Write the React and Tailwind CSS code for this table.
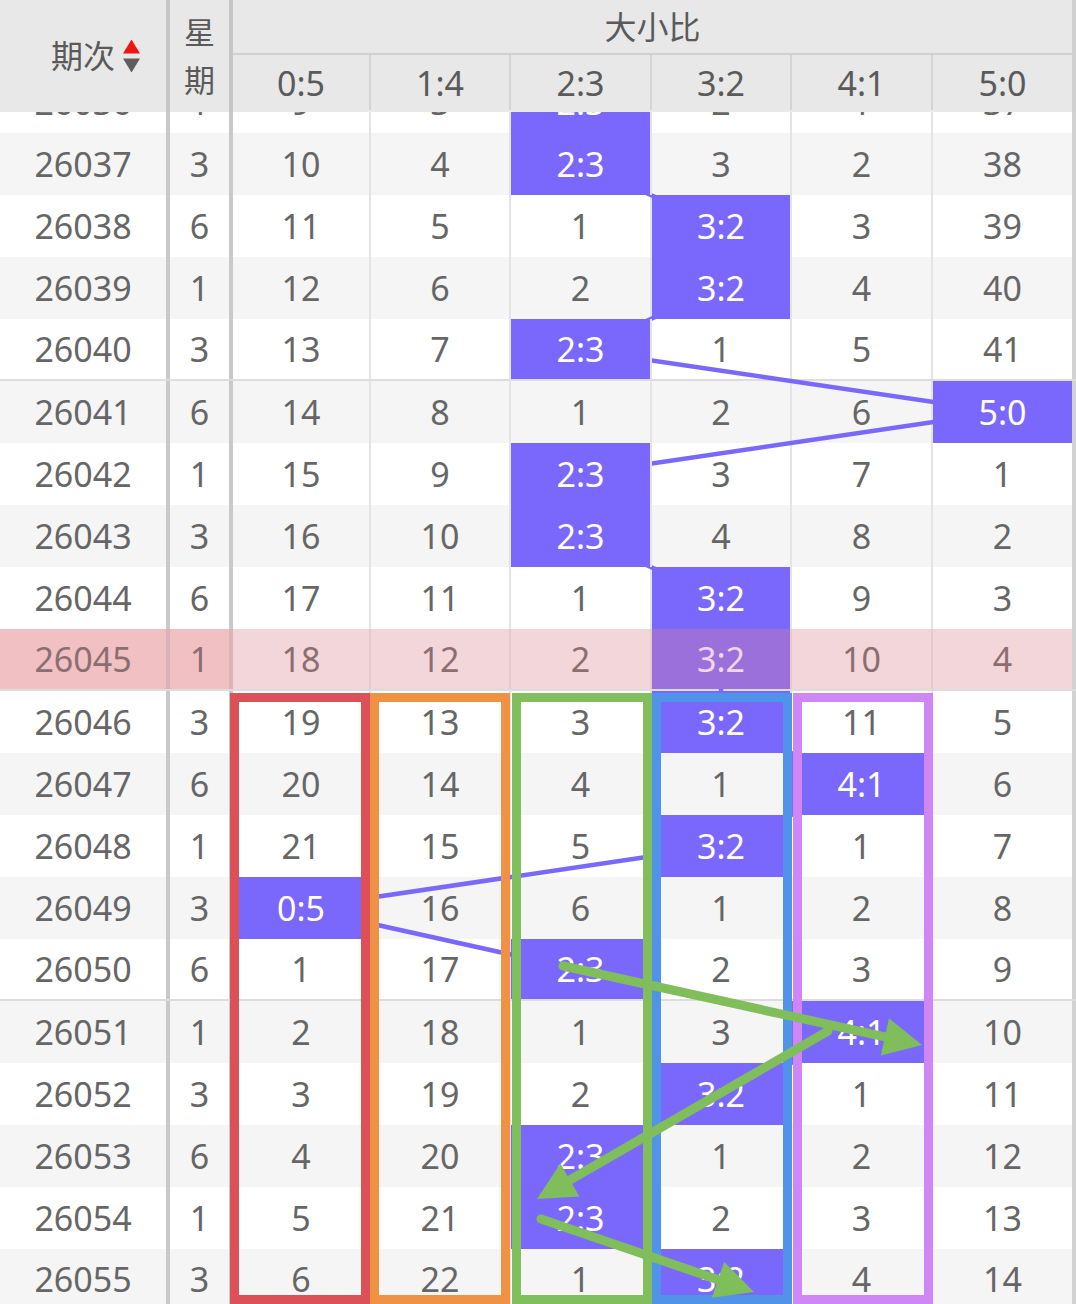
import React from 'react';

const LABELS = ['0:5', '1:4', '2:3', '3:2', '4:1', '5:0'];
const W = ['w-[138px]', 'w-[140px]', 'w-[141px]', 'w-[140px]', 'w-[141px]', 'w-[139px]'];
const COLX = [233, 371, 511, 652, 792, 933, 1072];
const CX = LABELS.map((_, i) => (COLX[i] + COLX[i + 1] - 2) / 2);

const RAW = [
  [26036, 1, 2, [9, 3, 0, 2, 1, 37]],
  [26037, 3, 2, [10, 4, 0, 3, 2, 38]],
  [26038, 6, 3, [11, 5, 1, 0, 3, 39]],
  [26039, 1, 3, [12, 6, 2, 0, 4, 40]],
  [26040, 3, 2, [13, 7, 0, 1, 5, 41]],
  [26041, 6, 5, [14, 8, 1, 2, 6, 0]],
  [26042, 1, 2, [15, 9, 0, 3, 7, 1]],
  [26043, 3, 2, [16, 10, 0, 4, 8, 2]],
  [26044, 6, 3, [17, 11, 1, 0, 9, 3]],
  [26045, 1, 3, [18, 12, 2, 0, 10, 4]],
  [26046, 3, 3, [19, 13, 3, 0, 11, 5]],
  [26047, 6, 4, [20, 14, 4, 1, 0, 6]],
  [26048, 1, 3, [21, 15, 5, 0, 1, 7]],
  [26049, 3, 0, [0, 16, 6, 1, 2, 8]],
  [26050, 6, 2, [1, 17, 0, 2, 3, 9]],
  [26051, 1, 4, [2, 18, 1, 3, 0, 10]],
  [26052, 3, 3, [3, 19, 2, 0, 1, 11]],
  [26053, 6, 2, [4, 20, 0, 1, 2, 12]],
  [26054, 1, 2, [5, 21, 0, 2, 3, 13]],
  [26055, 3, 3, [6, 22, 1, 0, 4, 14]],
];

const TOP = 71; // page y of first body row
const RH = 62;

function Row({ r, i }) {
  const [id, wk, hi, vals] = r;
  const pink = id === 26045;
  const odd = i % 2 === 1;
  const bg = pink ? 'bg-[#f3d6d9]' : odd ? 'bg-[#f5f5f5]' : 'bg-white';
  const sep = id % 5 === 0 ? 'border-b-2 border-[#dddddd]' : '';
  const txt = pink ? 'text-[#8c6e71]' : 'text-[#666666]';
  return (
    <div className={`flex h-[62px] ${bg} ${sep} ${txt}`}>
      <div className={`w-[166px] flex items-center justify-center ${pink ? 'bg-[#f0c0c3]' : ''}`}>{id}</div>
      <div className={`w-[4px] ${pink ? 'bg-[#dcb3b6]' : 'bg-[#c9c9c9]'}`} />
      <div className={`w-[59px] flex items-center justify-center ${pink ? 'bg-[#f0c0c3]' : ''}`}>{wk}</div>
      <div className={`w-[4px] ${pink ? 'bg-[#dcb3b6]' : 'bg-[#c9c9c9]'}`} />
      {vals.map((v, c) => {
        const border = c < 5 ? (pink ? 'border-r-2 border-[#e6caca]' : 'border-r-2 border-[#e4e4e4]') : '';
        if (c === hi) {
          return (
            <div
              key={c}
              className={`${W[c]} ${border} relative z-20 flex items-center justify-center ${pink ? 'bg-[#9c70db] text-[#f3d6e6]' : 'bg-[#7a68fd] text-white'}`}
            >
              {LABELS[c]}
            </div>
          );
        }
        return (
          <div key={c} className={`${W[c]} ${border} flex items-center justify-center`}>
            {v}
          </div>
        );
      })}
      <div className="w-[4px] bg-[#d2d2d2]" />
    </div>
  );
}

function Arrow({ x1, y1, x2, y2, L = 38, hw = 19, color = '#80bd5b' }) {
  const dx = x2 - x1;
  const dy = y2 - y1;
  const len = Math.hypot(dx, dy);
  const ux = dx / len;
  const uy = dy / len;
  const bx = x2 - ux * L;
  const by = y2 - uy * L;
  const px = -uy;
  const py = ux;
  const pts = `${x2},${y2} ${bx + px * hw},${by + py * hw} ${bx - px * hw},${by - py * hw}`;
  return (
    <g>
      <line x1={x1} y1={y1} x2={bx + ux * 6} y2={by + uy * 6} stroke={color} strokeWidth="9" strokeLinecap="round" />
      <polygon points={pts} fill={color} />
    </g>
  );
}

function Box({ left, right, color }) {
  const sw = 9;
  return (
    <rect
      x={left + sw / 2}
      y={693 + sw / 2}
      width={right - left - sw}
      height={1304 - 693 - sw}
      fill="none"
      stroke={color}
      strokeWidth={sw}
    />
  );
}

export default function App() {
  const H = RAW.length * RH;
  const pts = RAW.map((r, i) => `${CX[r[2]]},${TOP + i * RH + RH / 2}`).join(' ');
  return (
    <div className="w-[1076px] h-[1304px] overflow-hidden bg-white font-['Noto_Sans','Noto_Sans_CJK_SC',sans-serif] text-[34px] leading-none">
      {/* Header */}
      <div className="flex h-[112px] bg-[#e8e8e8] text-[#5a5a5a]">
        <div className="w-[166px] flex items-center justify-center">
          <span className="relative text-[32px]">
            期次
            <svg className="absolute left-[calc(100%+8px)] top-1/2 -translate-y-1/2" width="17" height="33" viewBox="0 0 17 33">
              <polygon points="8.5,0 17,14 0,14" fill="#f01414" />
              <polygon points="0,19 17,19 8.5,33" fill="#5e5e5e" />
            </svg>
          </span>
        </div>
        <div className="w-[4px] bg-[#c6c6c6]" />
        <div className="w-[59px] flex flex-col items-center justify-center text-[31px] leading-[48px]">
          <span>星</span>
          <span>期</span>
        </div>
        <div className="w-[4px] bg-[#c6c6c6]" />
        <div className="w-[839px] flex flex-col">
          <div className="h-[55px] flex items-center justify-center text-[32px] border-b-2 border-[#d0d0d0]">大小比</div>
          <div className="h-[55px] flex">
            {LABELS.map((l, c) => (
              <div key={c} className={`${W[c]} ${c < 5 ? 'border-r-2 border-[#d4d4d4]' : ''} flex items-center justify-center`}>
                {l}
              </div>
            ))}
          </div>
        </div>
        <div className="w-[4px] bg-[#d0d0d0]" />
      </div>

      {/* Body */}
      <div className="relative h-[1192px] overflow-hidden">
        <div className="relative -mt-[41px]">
          {RAW.map((r, i) => (
            <Row key={r[0]} r={r} i={i} />
          ))}
          <svg
            className="absolute left-0 top-0 z-10 pointer-events-none"
            width="1076"
            height={H}
            viewBox={`0 ${TOP} 1076 ${H}`}
          >
            <polyline points={pts} fill="none" stroke="#7a68fd" strokeWidth="4.5" strokeLinejoin="round" />
          </svg>
          <svg
            className="absolute left-0 top-0 z-30 pointer-events-none"
            width="1076"
            height={H}
            viewBox={`0 ${TOP} 1076 ${H}`}
          >
            <Box left={230} right={370} color="#dc5058" />
            <Box left={370} right={510} color="#ef9244" />
            <Box left={512} right={652} color="#80bf5c" />
            <Box left={652} right={792} color="#4f94e8" />
            <Box left={793} right={933} color="#cf86f7" />
            <Arrow x1={563} y1={966} x2={922} y2={1045} />
            <Arrow x1={828} y1={1031} x2={537} y2={1199} />
            <Arrow x1={541} y1={1219} x2={754} y2={1292} />
          </svg>
        </div>
      </div>
    </div>
  );
}
